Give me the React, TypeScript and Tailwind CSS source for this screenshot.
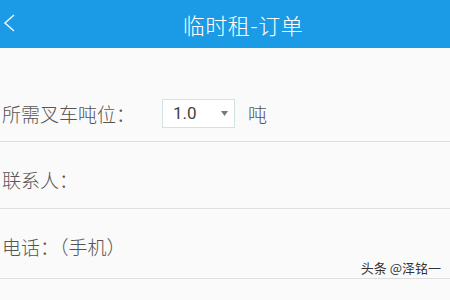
export default function App() {
  const font = { fontFamily: '"Noto Sans CJK SC", "Noto Sans", sans-serif' };
  return (
    <div className="relative h-[300px] w-[450px] overflow-hidden bg-[#fafafa]" style={font}>
      <div className="relative flex h-[48px] items-center justify-center bg-[#1b9ae6] pl-[36px]">
        <svg className="absolute left-[2px] top-[13px]" width="14" height="20" viewBox="0 0 14 20">
          <polyline points="12,2 3,10 12,18" fill="none" stroke="#e8f4fc" strokeWidth="1.6" />
        </svg>
        <span className="text-[22px] font-light tracking-[0.5px] text-white">临时租-订单</span>
      </div>

      <div className="flex h-[94px] items-end border-b border-[#dedede] pb-[13px] pl-[2px]">
        <span className="text-[19px] font-light leading-[28px] text-[#555]">所需叉车吨位：</span>
        <div className="ml-[27px] flex h-[29px] w-[73px] items-center justify-between border border-[#cfe3e0] bg-white pl-[10px] pr-[6px]">
          <span className="text-[17px] text-[#444]" style={{ fontFamily: 'Roboto, "Noto Sans", sans-serif' }}>1.0</span>
          <svg width="7" height="5" viewBox="0 0 7 5">
            <polygon points="0,0 7,0 3.5,5" fill="#777" />
          </svg>
        </div>
        <span className="ml-[13px] text-[19px] font-light leading-[28px] text-[#555]">吨</span>
      </div>

      <div className="flex h-[67px] items-end border-b border-[#dedede] pb-[14px] pl-[2px]">
        <span className="text-[19px] font-light leading-[28px] text-[#555]">联系人：</span>
      </div>

      <div className="flex h-[70px] items-end border-b border-[#dedede] pb-[17px] pl-[2px]">
        <span className="text-[19px] font-light leading-[28px] text-[#555]">电话：（手机）</span>
      </div>

      <div
        className="absolute right-[9px] top-[258px] text-[13px] text-[#333]"
        style={{ textShadow: "0 0 2px #fff, 0 0 2px #fff" }}
      >
        头条 @泽铭一
      </div>
    </div>
  );
}
